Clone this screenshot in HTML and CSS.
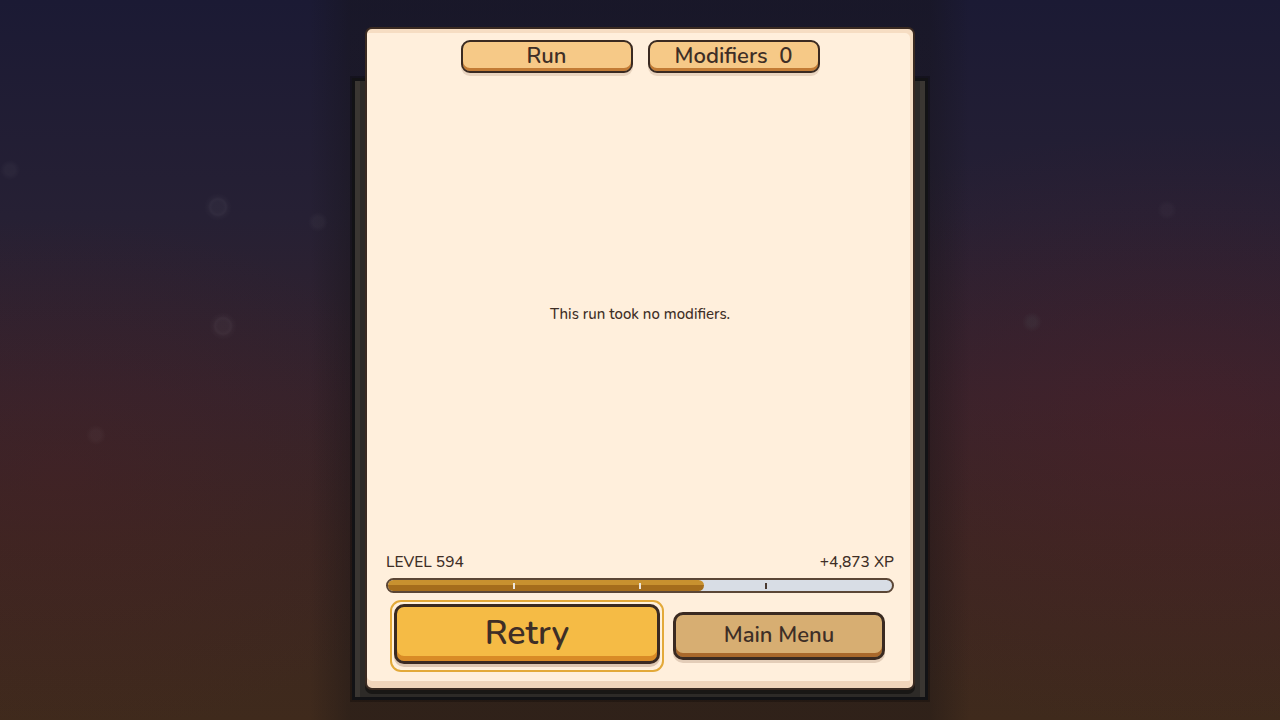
FILE: index.html
```html
<!DOCTYPE html>
<html lang="en">
<head>
  <meta charset="UTF-8">
  <title>Run Summary</title>
  <link rel="stylesheet" href="styles.css">
</head>
<body>
  <div class="stage">
    <div class="window">
      <div class="panel">
        <div class="tabs">
          <button class="tab">Run</button>
          <button class="tab">Modifiers&nbsp; 0</button>
        </div>

        <div class="tab-body">
          <p class="empty-note">This run took no modifiers.</p>
        </div>

        <div class="level-row">
          <span>LEVEL 594</span>
          <span>+4,873 XP</span>
        </div>
        <div class="xp-bar">
          <div class="xp-fill" style="width: 62.6%"></div>
          <i class="tick on" style="left: 25%"></i>
          <i class="tick on" style="left: 50%"></i>
          <i class="tick" style="left: 75%"></i>
        </div>

        <div class="actions">
          <div class="focus-ring">
            <button class="btn btn-retry">Retry</button>
          </div>
          <button class="btn btn-menu">Main Menu</button>
        </div>
      </div>
    </div>
  </div>
</body>
</html>
```

FILE: styles.css
```css
:root {
  --ink: #3e2e26;
  --line: #3a2a21;
  --paper: #ffefdc;
}
html, body {
  margin: 0;
  height: 720px;
  overflow: hidden;
}
body {
  font-family: "Nunito", "Open Sans", "Noto Sans", sans-serif;
  color: var(--ink);
  background:
    radial-gradient(circle at 218px 207px, rgba(255,255,255,0.035) 0 5px, rgba(255,255,255,0.05) 8px, rgba(255,255,255,0.02) 10px, transparent 14px),
    radial-gradient(circle at 223px 326px, rgba(255,255,255,0.035) 0 5px, rgba(255,255,255,0.05) 8px, rgba(255,255,255,0.02) 10px, transparent 14px),
    radial-gradient(circle at 96px 435px, rgba(255,255,255,0.03) 0 5px, transparent 10px),
    radial-gradient(circle at 318px 222px, rgba(255,255,255,0.03) 0 5px, transparent 10px),
    radial-gradient(circle at 10px 170px, rgba(255,255,255,0.03) 0 5px, transparent 10px),
    radial-gradient(circle at 1032px 322px, rgba(140,220,200,0.05) 0 4px, transparent 10px),
    radial-gradient(circle at 1167px 210px, rgba(255,255,255,0.025) 0 5px, transparent 10px),
    linear-gradient(to right, transparent 310px, rgba(20,18,20,0.35) 350px, rgba(20,18,20,0.35) 930px, transparent 970px),
    radial-gradient(ellipse 500px 300px at 1180px 430px, rgba(90,30,40,0.35), transparent),
    radial-gradient(ellipse 400px 260px at 60px 480px, rgba(80,30,35,0.3), transparent),
    linear-gradient(180deg, #1b1a34 0%, #262034 30%, #35232c 55%, #3b2622 75%, #3f2a1c 100%);
}

.stage {
  display: flex;
  justify-content: center;
  padding-top: 27px;
}

/* dark back plate peeking out behind the card */
.window {
  position: relative;
  isolation: isolate;
  width: 550px;
  height: 663px;
}
.window::before {
  content: "";
  position: absolute;
  left: -13px;
  right: -13px;
  top: 51px;
  bottom: -10px;
  z-index: -1;
  background: #2d2a27;
  border: 3px solid #121215;
  box-shadow: inset 5px 0 0 #3a3632, inset -5px 0 0 #3a3632, 0 0 0 2px rgba(0,0,0,0.25);
}

.panel {
  box-sizing: border-box;
  height: 100%;
  display: flex;
  flex-direction: column;
  padding: 11px 19px 16px;
  background: var(--paper);
  border: 2px solid var(--line);
  border-radius: 7px;
  box-shadow:
    inset -3px 4px 0 #f6ddc3,
    inset 0 -7px 0 #f0d5bb,
    0 4px 0 rgba(10,8,8,0.55);
}

.tabs {
  display: flex;
  justify-content: center;
  gap: 15px;
}
.tab {
  width: 172px;
  height: 33px;
  padding: 0 0 2px;
  font: inherit;
  font-size: 22px;
  font-weight: 600;
  line-height: 1;
  color: var(--ink);
  background: #f6c987;
  border: 2.5px solid var(--line);
  border-radius: 9px;
  box-shadow: inset 0 -3px 0 #c27b35, 0 3px 0 #e9d4bf;
  cursor: pointer;
}

.tab-body {
  flex: 1;
  display: flex;
  align-items: center;
  justify-content: center;
}
.empty-note {
  margin: 2px 0 0;
  font-size: 15px;
  font-weight: 500;
}

.level-row {
  display: flex;
  justify-content: space-between;
  font-size: 15.5px;
  font-weight: 500;
  line-height: 20px;
}

.xp-bar {
  position: relative;
  box-sizing: border-box;
  height: 15px;
  margin-top: 6px;
  background: #d8dde5;
  border: 2px solid #5b4636;
  border-radius: 8px;
  overflow: hidden;
}
.xp-fill {
  height: 100%;
  background: linear-gradient(#c8912f 0 45%, #a56d1c 45%);
  border-radius: 0 6px 6px 0;
}
.tick {
  position: absolute;
  top: 3px;
  width: 2px;
  height: 6px;
  margin-left: -1px;
  background: #4a3a30;
}
.tick.on {
  background: #ece6dc;
}

.actions {
  display: flex;
  align-items: center;
  gap: 9px;
  margin-top: 7px;
  padding: 0 9px 0 4px;
}
.focus-ring {
  box-sizing: border-box;
  width: 274px;
  height: 72px;
  padding: 2px 2px 6px;
  border: 2px solid #e3a939;
  border-radius: 11px;
  box-shadow: 0 0 0 1px #fff3dd inset;
}
.btn {
  font: inherit;
  font-weight: 600;
  color: var(--ink);
  border: 3px solid var(--line);
  border-radius: 10px;
  cursor: pointer;
}
.btn-retry {
  width: 100%;
  height: 60px;
  padding-bottom: 4px;
  font-size: 34px;
  background: #f5bb45;
  box-shadow: inset 0 -5px 0 #d98b26, 0 3px 0 #dcc6b0;
}
.btn-menu {
  flex: 1;
  height: 48px;
  padding-bottom: 3px;
  font-size: 22px;
  background: #d7ae72;
  box-shadow: inset 0 -4px 0 #a9682b, 0 3px 0 #e3cdb8;
}
```
